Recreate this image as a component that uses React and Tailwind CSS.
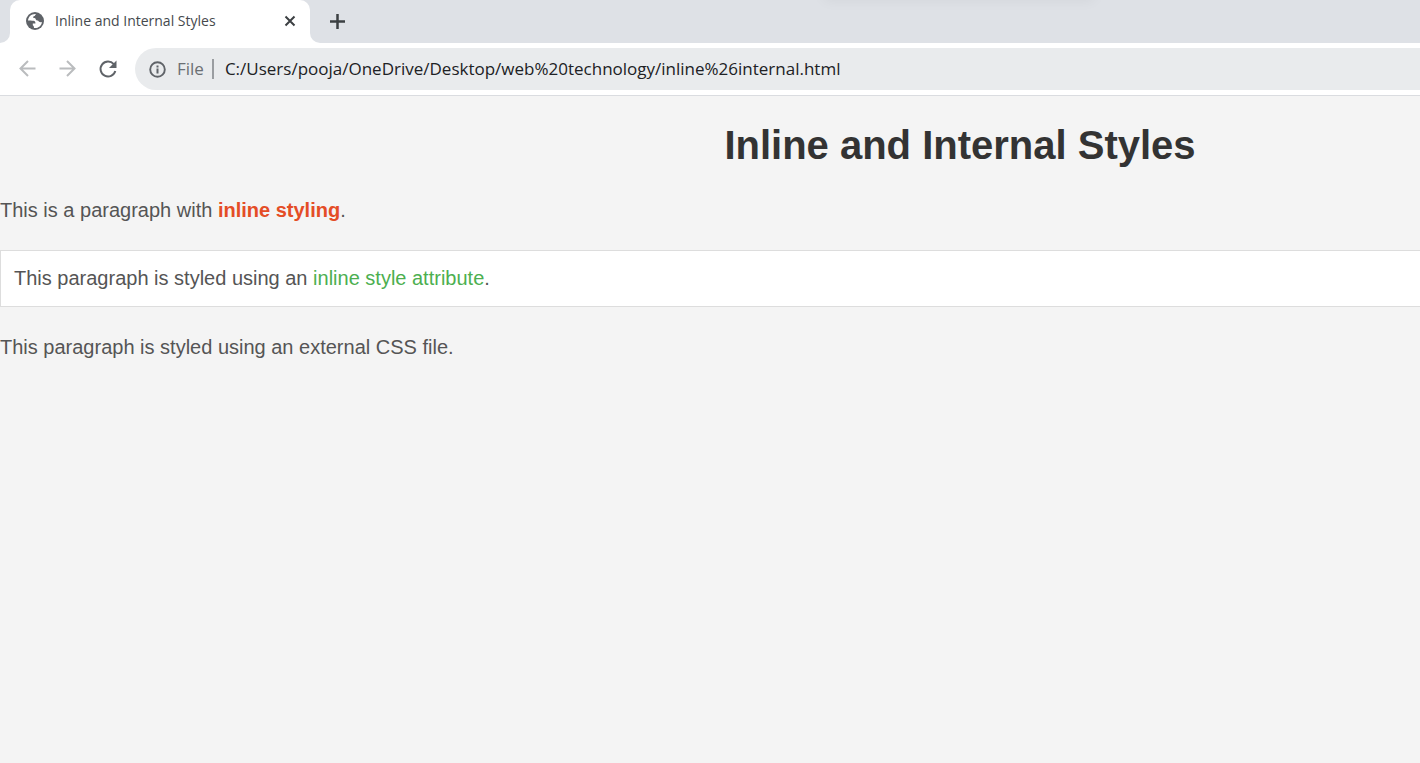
import React from "react";

function Globe() {
  return (
    <svg viewBox="0 0 18 18" className="size-[18px] shrink-0" aria-hidden="true">
      <circle cx="9" cy="9" r="9" fill="#5f6368" />
      <path
        fill="#fff"
        d="M10.200 2.100C6 1.500 2.300 4.400 2 8.500c1.600.1 3.800 0 5.500.3 1.500.3 2.100 1.300 1.900 2.600H6.800v1.900c.8.5 1.200 1.300 1.200 2.600 3.900.6 7.500-2 8-6-1 .5-2.500.3-3.200-.5-.6-.8-1.900-.6-2.600-1.300-.6-.7-.3-1.400-1.100-1.900-.8-.4-1.800-.1-2-1-.2-1.100 1.400-.9 1.900-1.500.3-.5.2-1.100 1.200-1.600z"
      />
    </svg>
  );
}

function ArrowIcon({ path }) {
  return (
    <svg viewBox="0 0 22 22" className="size-[22px]" fill="none" stroke="currentColor" strokeWidth="2" aria-hidden="true">
      <path d={path} />
    </svg>
  );
}

function ReloadIcon() {
  return (
    <svg viewBox="0 0 24 24" className="size-6" aria-hidden="true">
      <path d="M17.800 7.200A7.500 7.500 0 1 0 19.300 14" fill="none" stroke="currentColor" strokeWidth="2" />
      <path d="M20.500 3.500v7.500H13z" fill="currentColor" />
    </svg>
  );
}

function InfoIcon() {
  return (
    <svg viewBox="0 0 20 20" className="size-5 shrink-0 text-[#5f6368]" aria-hidden="true">
      <circle cx="10.500" cy="10.500" r="7.300" fill="none" stroke="currentColor" strokeWidth="1.900" />
      <path d="M9.500 9.500h2v5h-2zM9.500 6.500h2v2h-2z" fill="currentColor" />
    </svg>
  );
}

function TabStrip() {
  return (
    <div className="relative flex h-[43px] bg-[#dee1e6] pl-[10px]">
      <div className="absolute -top-3 left-[58%] h-3 w-[270px] shadow-[0_0_14px_rgba(0,0,0,0.06)]" />
      <div className="relative flex w-[300px] items-center rounded-t-[10px] bg-white pr-3 pb-px pl-4">
        <span className="absolute bottom-0 -left-[10px] size-[10px] bg-white">
          <span className="block size-full rounded-br-[10px] bg-[#dee1e6]" />
        </span>
        <span className="absolute -right-[10px] bottom-0 size-[10px] bg-white">
          <span className="block size-full rounded-bl-[10px] bg-[#dee1e6]" />
        </span>
        <Globe />
        <span className="ml-[11px] flex-1 font-['Open_Sans',sans-serif] text-[14px] leading-[20px] text-[#45494d]">
          Inline and Internal Styles
        </span>
        <button aria-label="Close tab" className="text-[#3c4043]">
          <svg viewBox="0 0 16 16" className="size-4" fill="none" stroke="currentColor" strokeWidth="2" aria-hidden="true">
            <path d="M3.500 3.500l9 9M12.500 3.500l-9 9" />
          </svg>
        </button>
      </div>
      <button aria-label="New tab" className="ml-4 self-center text-[#3c4043]">
        <svg viewBox="0 0 22 22" className="size-[22px]" fill="none" stroke="currentColor" strokeWidth="2.500" aria-hidden="true">
          <path d="M11.500 3v15M4 10.500h15" />
        </svg>
      </button>
    </div>
  );
}

function Toolbar() {
  return (
    <div className="flex h-[53px] items-center border-b border-[#dadce0] bg-white pl-4">
      <div className="flex items-center gap-[18px]">
        <button aria-label="Back" className="text-[#babcbe]">
          <ArrowIcon path="M19.500 10.500H5M12 3L4.500 10.500l7.500 7.500" />
        </button>
        <button aria-label="Forward" className="text-[#babcbe]">
          <ArrowIcon path="M3.500 10.500H18M11 3l7.500 7.500-7.500 7.500" />
        </button>
        <button aria-label="Reload" className="text-[#5f6368]">
          <ReloadIcon />
        </button>
      </div>
      <div className="ml-[15px] flex h-[42px] flex-1 items-center rounded-l-full bg-[#e9ebed] pl-3 font-['Open_Sans',sans-serif] text-[17px]">
        <InfoIcon />
        <label htmlFor="address" className="ml-[10px] text-[#6b6f74]">
          File
        </label>
        <span className="ml-2 h-5 w-[2px] bg-[#9a9da1]" />
        <input
          id="address"
          type="text"
          defaultValue="C:/Users/pooja/OneDrive/Desktop/web%20technology/inline%26internal.html"
          className="ml-[11px] min-w-0 flex-1 bg-transparent text-[#202124] outline-none"
        />
      </div>
    </div>
  );
}

export default function App() {
  return (
    <div className="flex min-h-screen flex-col bg-[#f4f4f4]">
      <header>
        <TabStrip />
        <Toolbar />
      </header>
      <main className="flex flex-col gap-[25px] pt-[19px] font-['Liberation_Sans',Arial,sans-serif] text-[20px] leading-[30px] text-[#555]">
        <h1 className="-mb-[5px] pl-[500px] text-center text-[40px] leading-[60px] font-bold text-[#333]">
          Inline and Internal Styles
        </h1>
        <p>
          This is a paragraph with <strong className="font-bold text-[#e44d26]">inline styling</strong>.
        </p>
        <p className="border border-r-0 border-[#ddd] bg-white px-[13px] pt-3 pb-[13px]">
          This paragraph is styled using an <span className="text-[#4caf50]">inline style attribute</span>.
        </p>
        <p>This paragraph is styled using an external CSS file.</p>
      </main>
    </div>
  );
}
